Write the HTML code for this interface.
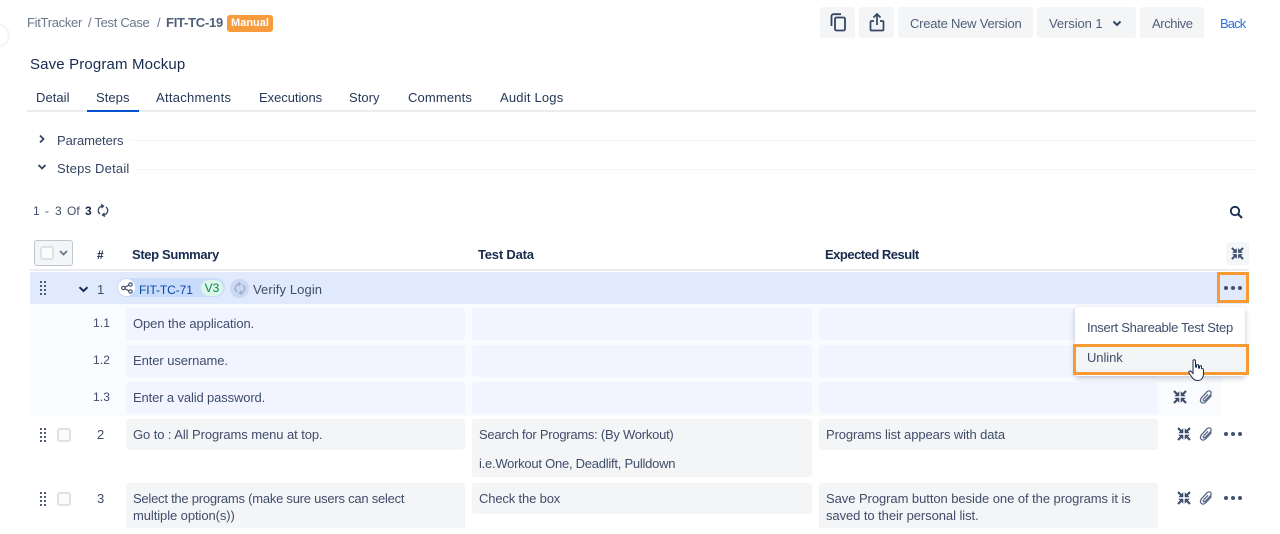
<!DOCTYPE html>
<html><head><meta charset="utf-8"><style>
html,body{margin:0;padding:0;background:#fff}
#p{position:relative;width:1280px;height:534px;overflow:hidden;background:#fff;font-family:"Liberation Sans",sans-serif;font-size:13px;color:#3f4d6b;letter-spacing:-.08px}
#p div,#p svg{position:absolute}
.t{white-space:nowrap;line-height:16px}
.b{background:#f4f5f7;border-radius:3px}
.c{background:#f4f5f7;border-radius:3px}
.s{background:#f2f5ff;border-radius:3px}
.h{font-weight:bold;color:#172b4d}
.tab{color:#253858;top:90px;letter-spacing:.05px}
.cb{width:10px;height:10px;background:#fafbfc;border:2px solid #dfe1e6;border-radius:3px}
</style></head><body><div id="p">
<svg width="0" height="0" style="display:none"><defs>
<symbol id="col" viewBox="0 0 14 14"><g fill="#3f4f6e" stroke="#3f4f6e"><path d="M1 1l3.500 3.500M13 1L9.500 4.500M1 13l3.500-3.500M13 13L9.500 9.500" fill="none" stroke-width="2.200"/><path d="M6 6V2L2 6zM8 6V2l4 4zM6 8v4L2 8zM8 8v4l4-4z" stroke-width=".6"/></g></symbol>
<symbol id="clip" viewBox="0 0 14 14"><path d="M12.500 5.500L6.800 11.700c-1.500 1.600-3.300 1.800-4.500.7S1 9.300 2.500 7.700L7.800 2c1.200-1.300 2.700-1.500 3.700-.6s.9 2.400-.3 3.700L6.300 10.300c-.6.600-1.300.7-1.800.3s-.4-1.200.2-1.800l4.300-4.500" fill="none" stroke="#5b6b8a" stroke-width="1.300"/></symbol>
<symbol id="dots" viewBox="0 0 18 4"><circle cx="2" cy="2" r="2" fill="#42526e"/><circle cx="9" cy="2" r="2" fill="#42526e"/><circle cx="16" cy="2" r="2" fill="#42526e"/></symbol>
<symbol id="grip" viewBox="0 0 7 14"><g fill="#505f79"><rect x="0" y="0" width="2" height="2"/><rect x="4" y="0" width="2" height="2"/><rect x="0" y="4" width="2" height="2"/><rect x="4" y="4" width="2" height="2"/><rect x="0" y="8" width="2" height="2"/><rect x="4" y="8" width="2" height="2"/><rect x="0" y="12" width="2" height="2"/><rect x="4" y="12" width="2" height="2"/></g></symbol>
<symbol id="ref" viewBox="0 0 12 13"><g fill="none" stroke-width="1.300"><path d="M6 2A4.500 4.500 0 0 0 3 10M4 .5L6.500 2 4.500 4M6 11A4.500 4.500 0 0 0 9 3M8 12.500L5.500 11 7.500 9"/></g></symbol>
</defs></svg>

<div style="left:-18px;top:24px;width:26px;height:23px;border-radius:50%;background:#fff;box-shadow:0 0 3px rgba(9,30,66,.18)"></div>

<div class="t" style="left:27px;top:15px;color:#6b778c;letter-spacing:-.3px">FitTracker</div>
<div class="t" style="left:88px;top:15px;color:#6b778c;letter-spacing:-.3px">/ Test Case</div>
<div class="t" style="left:157px;top:15px;color:#6b778c">/</div>
<div class="t" style="left:166px;top:15px;font-weight:bold;color:#505f79;letter-spacing:-.25px">FIT-TC-19</div>
<div style="left:227px;top:15px;width:46px;height:17px;background:#f79b3d;border-radius:3px"></div>
<div class="t" style="left:227px;top:15px;width:46px;text-align:center;color:#fff;font-size:11px;font-weight:bold;letter-spacing:0">Manual</div>

<div class="b" style="left:820px;top:7px;width:35px;height:31px"></div>
<svg style="left:830px;top:13px" width="17" height="19" viewBox="0 0 17 19"><path d="M11 1.200H3.500a2 2 0 0 0-2 2V13" fill="none" stroke="#344563" stroke-width="1.800"/><rect x="5" y="4.500" width="10" height="13" rx="1.500" fill="none" stroke="#344563" stroke-width="1.800"/></svg>
<div class="b" style="left:859px;top:7px;width:35px;height:31px"></div>
<svg style="left:869px;top:13px" width="16" height="19" viewBox="0 0 16 19"><path d="M8 12V1.500M4.500 4.500L8 1l3.500 3.500M5 8H2.500a1 1 0 0 0-1 1v7.500a1 1 0 0 0 1 1h11a1 1 0 0 0 1-1V9a1 1 0 0 0-1-1H11" fill="none" stroke="#344563" stroke-width="1.700"/></svg>
<div class="b" style="left:898px;top:7px;width:135px;height:31px"></div>
<div class="t" style="left:910px;top:16px;color:#505f79;letter-spacing:-.23px">Create New Version</div>
<div class="b" style="left:1037px;top:7px;width:99px;height:31px"></div>
<div class="t" style="left:1049px;top:16px;color:#505f79">Version 1</div>
<svg style="left:1112px;top:20px" width="10" height="7" viewBox="0 0 10 7"><path d="M1.500 1.500L5 5l3.500-3.500" fill="none" stroke="#344563" stroke-width="2"/></svg>
<div class="b" style="left:1140px;top:7px;width:64px;height:31px"></div>
<div class="t" style="left:1152px;top:16px;color:#505f79;letter-spacing:-.4px">Archive</div>
<div class="t" style="left:1220px;top:16px;color:#2f6fe0;letter-spacing:-.9px">Back</div>

<div class="t" style="left:30px;top:56px;font-size:15px;line-height:18px;color:#172b4d;letter-spacing:.15px">Save Program Mockup</div>

<div class="t tab" style="left:36px">Detail</div>
<div class="t tab" style="left:96px">Steps</div>
<div class="t tab" style="left:156px;letter-spacing:.27px">Attachments</div>
<div class="t tab" style="left:259px;letter-spacing:-.05px">Executions</div>
<div class="t tab" style="left:349px">Story</div>
<div class="t tab" style="left:408px;letter-spacing:.15px">Comments</div>
<div class="t tab" style="left:500px;letter-spacing:.2px">Audit Logs</div>
<div style="left:27px;top:110px;width:1229px;height:2px;background:#ebecf0"></div>
<div style="left:87px;top:110px;width:52px;height:2px;background:#0052cc"></div>

<svg style="left:38px;top:134px" width="8" height="10" viewBox="0 0 8 10"><path d="M2 1.500L5.500 5 2 8.500" fill="none" stroke="#344563" stroke-width="1.800"/></svg>
<div class="t" style="left:57px;top:133px;color:#344563">Parameters</div>
<div style="left:130px;top:140px;width:1126px;height:1px;background:#f4f5f7"></div>
<svg style="left:37px;top:163px" width="10" height="8" viewBox="0 0 10 8"><path d="M1.500 2L5 5.500 8.500 2" fill="none" stroke="#344563" stroke-width="1.800"/></svg>
<div class="t" style="left:57px;top:161px;color:#344563;letter-spacing:.2px">Steps Detail</div>
<div style="left:136px;top:169px;width:1120px;height:1px;background:#f4f5f7"></div>

<div class="t" style="left:33px;top:203px;font-size:12px;letter-spacing:0">1</div>
<div class="t" style="left:45px;top:203px;font-size:12px;letter-spacing:0">-</div>
<div class="t" style="left:55px;top:203px;font-size:12px;letter-spacing:0">3</div>
<div class="t" style="left:67px;top:203px;font-size:12px;letter-spacing:0">Of</div>
<div class="t" style="left:85px;top:203px;font-size:12px;letter-spacing:0;font-weight:bold;color:#172b4d">3</div>
<svg style="left:97px;top:204px;stroke:#344563" width="12" height="13"><use href="#ref"/></svg>
<svg style="left:1229px;top:205px" width="14" height="14" viewBox="0 0 14 14"><circle cx="6" cy="6" r="4.200" fill="none" stroke="#172b4d" stroke-width="1.800"/><path d="M9 9l4 4" stroke="#172b4d" stroke-width="2"/></svg>

<div style="left:34px;top:240px;width:37px;height:24px;background:#f4f5f7;border:1px solid #c1c7d0;border-radius:3px"></div>
<div class="cb" style="left:40px;top:246px"></div>
<svg style="left:59px;top:250px" width="9" height="6" viewBox="0 0 9 6"><path d="M1 1l3.500 3.500L8 1" fill="none" stroke="#6b778c" stroke-width="1.800"/></svg>
<div class="t h" style="left:97px;top:247px;font-size:12px">#</div>
<div class="t h" style="left:132px;top:247px;letter-spacing:-.35px">Step Summary</div>
<div class="t h" style="left:478px;top:247px;letter-spacing:-.2px">Test Data</div>
<div class="t h" style="left:825px;top:247px;letter-spacing:-.5px">Expected Result</div>
<div class="b" style="left:1226px;top:242px;width:23px;height:23px"></div>
<svg style="left:1231px;top:247px" width="13" height="13"><use href="#col"/></svg>
<div style="left:30px;top:269px;width:1219px;height:2px;background:#ebecf0"></div>

<div style="left:30px;top:272px;width:1219px;height:32px;background:#e1e9fc"></div>
<svg style="left:40px;top:281px" width="7" height="14"><use href="#grip"/></svg>
<svg style="left:78px;top:286px" width="11" height="7" viewBox="0 0 11 7"><path d="M1.500 1.200L5.500 5l4-3.800" fill="none" stroke="#172b4d" stroke-width="2"/></svg>
<div class="t" style="left:97px;top:282px">1</div>
<div style="left:117px;top:278px;width:108px;height:19px;background:#c9dcfb;border-radius:10px"></div>
<div style="left:118px;top:279px;width:17px;height:17px;background:#fff;border-radius:50%"></div>
<svg style="left:121px;top:282px" width="12" height="12" viewBox="0 0 12 12"><g fill="none" stroke="#42526e" stroke-width="1.200"><circle cx="2.500" cy="6" r="1.700"/><circle cx="9.500" cy="2.500" r="1.700"/><circle cx="9.500" cy="9.500" r="1.700"/><path d="M4 5.200l4-2M4 6.800l4 2"/></g></svg>
<div class="t" style="left:139px;top:282px;color:#0747a6;font-size:12px;letter-spacing:-.1px">FIT-TC-71</div>
<div style="left:201px;top:280px;width:22px;height:16px;background:#def7ea;border-radius:8px"></div>
<div class="t" style="left:201px;top:280px;width:22px;text-align:center;color:#00875a;font-size:12px;letter-spacing:0">V3</div>
<div style="left:230px;top:279px;width:19px;height:19px;background:#c9d8f5;border-radius:50%"></div>
<svg style="left:234px;top:282px;stroke:#a5adba" width="12" height="13"><use href="#ref"/></svg>
<div class="t" style="left:253px;top:282px;letter-spacing:.1px">Verify Login</div>
<div style="left:1217px;top:272px;width:26px;height:25px;border:3px solid #f79a32"></div>
<svg style="left:1224px;top:286px" width="18" height="4"><use href="#dots"/></svg>

<div style="left:30px;top:304px;width:1191px;height:112px;background:#fafbff"></div>
<div class="t" style="left:93px;top:315px;font-size:12px;letter-spacing:.1px">1.1</div>
<div class="t" style="left:93px;top:352px;font-size:12px;letter-spacing:.1px">1.2</div>
<div class="t" style="left:93px;top:389px;font-size:12px;letter-spacing:.1px">1.3</div>

<div class="s" style="left:126px;top:308px;width:339px;height:32px"></div>
<div class="s" style="left:472px;top:308px;width:340px;height:32px"></div>
<div class="s" style="left:819px;top:308px;width:339px;height:32px"></div>
<div class="s" style="left:126px;top:345px;width:339px;height:32px"></div>
<div class="s" style="left:472px;top:345px;width:340px;height:32px"></div>
<div class="s" style="left:819px;top:345px;width:339px;height:32px"></div>
<div class="s" style="left:126px;top:382px;width:339px;height:32px"></div>
<div class="s" style="left:472px;top:382px;width:340px;height:32px"></div>
<div class="s" style="left:819px;top:382px;width:339px;height:32px"></div>
<div class="t" style="left:133px;top:316px">Open the application.</div>
<div class="t" style="left:133px;top:353px">Enter username.</div>
<div class="t" style="left:133px;top:390px;letter-spacing:-.13px">Enter a valid password.</div>

<svg style="left:1173px;top:390px" width="14" height="14"><use href="#col"/></svg>
<svg style="left:1199px;top:390px" width="14" height="14"><use href="#clip"/></svg>

<svg style="left:40px;top:428px" width="7" height="14"><use href="#grip"/></svg>
<div class="cb" style="left:57px;top:428px"></div>
<div class="t" style="left:97px;top:427px">2</div>
<div class="c" style="left:126px;top:419px;width:339px;height:31px"></div>
<div class="c" style="left:472px;top:419px;width:340px;height:58px"></div>
<div class="c" style="left:819px;top:419px;width:339px;height:31px"></div>
<div class="t" style="left:133px;top:427px">Go to : All Programs menu at top.</div>
<div class="t" style="left:479px;top:427px;letter-spacing:-.25px">Search for Programs: (By Workout)</div>
<div class="t" style="left:479px;top:456px;letter-spacing:-.25px">i.e.Workout One, Deadlift, Pulldown</div>
<div class="t" style="left:826px;top:427px;letter-spacing:-.1px">Programs list appears with data</div>
<svg style="left:1177px;top:427px" width="14" height="14"><use href="#col"/></svg>
<svg style="left:1199px;top:427px" width="14" height="14"><use href="#clip"/></svg>
<svg style="left:1224px;top:432px" width="18" height="4"><use href="#dots"/></svg>

<svg style="left:40px;top:492px" width="7" height="14"><use href="#grip"/></svg>
<div class="cb" style="left:57px;top:492px"></div>
<div class="t" style="left:97px;top:491px">3</div>
<div class="c" style="left:126px;top:483px;width:339px;height:45px;border-radius:3px 3px 0 0"></div>
<div class="c" style="left:472px;top:483px;width:340px;height:31px"></div>
<div class="c" style="left:819px;top:483px;width:339px;height:45px;border-radius:3px 3px 0 0"></div>
<div class="t" style="left:133px;top:491px;letter-spacing:-.24px">Select the programs (make sure users can select</div>
<div class="t" style="left:133px;top:508px">multiple option(s))</div>
<div class="t" style="left:479px;top:491px;letter-spacing:-.15px">Check the box</div>
<div class="t" style="left:826px;top:491px;letter-spacing:-.06px">Save Program button beside one of the programs it is</div>
<div class="t" style="left:826px;top:508px;letter-spacing:-.07px">saved to their personal list.</div>
<svg style="left:1177px;top:491px" width="14" height="14"><use href="#col"/></svg>
<svg style="left:1199px;top:491px" width="14" height="14"><use href="#clip"/></svg>
<svg style="left:1224px;top:496px" width="18" height="4"><use href="#dots"/></svg>

<div style="left:1075px;top:307px;width:170px;height:69px;background:#fff;border-radius:3px;box-shadow:0 2px 6px rgba(9,30,66,.25)"></div>
<div class="t" style="left:1087px;top:320px;letter-spacing:-.27px">Insert Shareable Test Step</div>
<div style="left:1073px;top:344px;width:170px;height:25px;background:#f4f5f7;border:3px solid #f79a32"></div>
<div class="t" style="left:1087px;top:350px">Unlink</div>
<svg style="left:1188px;top:358px" width="17" height="25" viewBox="0 0 17 25"><path d="M5 14V3c0-1.700 2.500-1.700 2.500 0v6l1 .1V7.500c0-1.300 2-1.300 2 0V10l1 .1V8.500c0-1.200 2-1.200 2 0v2l.6.100c1-.1 1.400.6 1.400 1.400v4c0 3-1.800 6.500-5.500 6.500-3.500 0-5-1.500-6.500-4L1 15c-.8-1.500 1-2.800 2.200-1.500L5 15.500z" fill="#fff" stroke="#172b4d" stroke-width="1"/></svg>
</div></body></html>
